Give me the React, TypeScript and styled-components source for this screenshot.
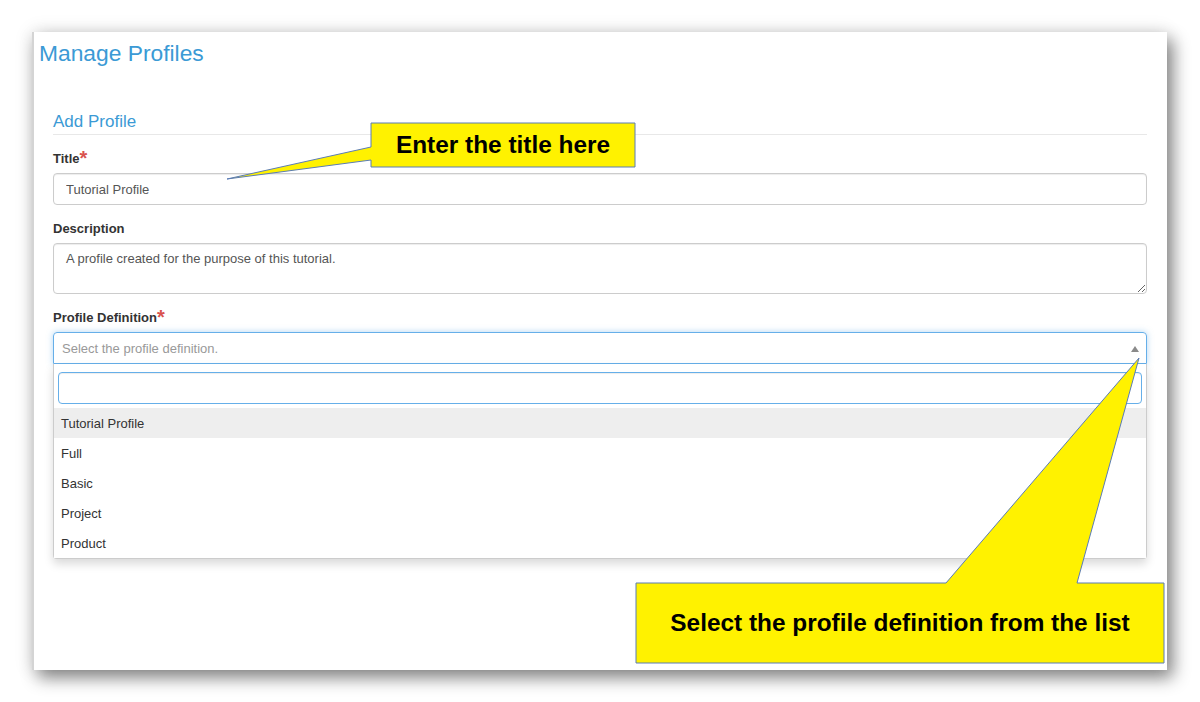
import React from "react";
import styled, { createGlobalStyle } from "styled-components";

const Global = createGlobalStyle`
  body {
    margin: 0;
    background: #fff;
    font-family: "Liberation Sans", Arial, sans-serif;
  }
  * { box-sizing: border-box; }
`;

const Page = styled.div`
  position: relative;
  width: 1200px;
  height: 702px;
  overflow: hidden;
  padding: 32px 0 0 32px;
  background: #fff;
`;

const Panel = styled.section`
  width: 1135px;
  height: 638px;
  background: #fff;
  border-left: 2px solid #d4d4d4;
  box-shadow: 6px 8px 16px rgba(0, 0, 0, 0.45), 0 0 18px rgba(0, 0, 0, 0.12);
  padding: 8px 20px 0 5px;
`;

const Heading = styled.h1`
  margin: 0;
  font-size: 22.8px;
  line-height: 27px;
  font-weight: normal;
  color: #3b9ad5;
`;

const Form = styled.form`
  margin: 45px 0 0 14px;
`;

const Legend = styled.h2`
  margin: 0 0 16px;
  font-size: 17px;
  line-height: 20px;
  font-weight: normal;
  color: #3b9ad5;
  padding-bottom: 2px;
  border-bottom: 1px solid #e8e8e8;
`;

const Group = styled.div`
  margin-bottom: 16px;
`;

const Label = styled.label`
  display: block;
  font-size: 13px;
  line-height: 15px;
  font-weight: bold;
  color: #333;
  margin-bottom: 7px;
`;

const Req = styled.span`
  color: #d9534f;
  font-size: 20px;
  font-weight: bold;
  line-height: 0;
  position: relative;
  top: 2px;
`;

const fieldBase = `
  display: block;
  width: 100%;
  border: 1px solid #ccc;
  border-radius: 4px;
  font-family: "Liberation Sans", Arial, sans-serif;
  font-size: 13px;
  color: #555;
  background: #fff;
  box-shadow: inset 0 1px 1px rgba(0, 0, 0, 0.075);
  outline: none;
`;

const Input = styled.input`
  ${fieldBase}
  height: 32px;
  padding: 0 12px;
`;

const TextArea = styled.textarea`
  ${fieldBase}
  height: 51px;
  padding: 7px 12px;
  line-height: 16px;
  resize: vertical;
`;

const SelectBox = styled.div`
  display: flex;
  align-items: center;
  justify-content: space-between;
  height: 32px;
  padding: 0 7px 0 8px;
  border: 1px solid #66afe9;
  border-radius: 4px 4px 0 0;
  box-shadow: 0 0 6px rgba(102, 175, 233, 0.5);
  font-size: 13px;
  color: #999;
`;

const Arrow = styled.span`
  width: 0;
  height: 0;
  border-left: 4px solid transparent;
  border-right: 4px solid transparent;
  border-bottom: 6px solid #8a8a8a;
  margin-top: 1px;
`;

const Dropdown = styled.div`
  border: 1px solid #ccc;
  border-top: none;
  border-radius: 0 0 4px 4px;
  box-shadow: 0 5px 10px rgba(0, 0, 0, 0.15);
  background: #fff;
`;

const SearchWrap = styled.div`
  padding: 8px 4px 4px;
`;

const Search = styled.input`
  ${fieldBase}
  height: 32px;
  border-color: #66afe9;
  padding: 0 8px;
`;

const Option = styled.div<{ $active?: boolean }>`
  height: 30px;
  line-height: 31px;
  padding: 0 7px;
  font-size: 13px;
  color: #333;
  background: ${({ $active }) => ($active ? "#eeeeee" : "#fff")};
`;

const Callout = styled.div`
  position: absolute;
  display: flex;
  align-items: center;
  justify-content: center;
  font-size: 24.4px;
  font-weight: bold;
  color: #000;
  svg {
    position: absolute;
    left: 0;
    top: 0;
    overflow: visible;
  }
  span {
    position: relative;
  }
`;

const options = ["Tutorial Profile", "Full", "Basic", "Project", "Product"];

export default function App() {
  return (
    <Page>
      <Global />
      <Panel>
        <Heading>Manage Profiles</Heading>
        <Form onSubmit={(e) => e.preventDefault()}>
          <Legend>Add Profile</Legend>
          <Group>
            <Label>
              Title<Req>*</Req>
            </Label>
            <Input defaultValue="Tutorial Profile" />
          </Group>
          <Group>
            <Label>Description</Label>
            <TextArea defaultValue="A profile created for the purpose of this tutorial." />
          </Group>
          <Group>
            <Label>
              Profile Definition<Req>*</Req>
            </Label>
            <SelectBox>
              <span>Select the profile definition.</span>
              <Arrow />
            </SelectBox>
            <Dropdown>
              <SearchWrap>
                <Search />
              </SearchWrap>
              {options.map((o, i) => (
                <Option key={o} $active={i === 0}>
                  {o}
                </Option>
              ))}
            </Dropdown>
          </Group>
        </Form>
      </Panel>

      <Callout style={{ left: 371, top: 123, width: 264, height: 44 }}>
        <svg width="264" height="44">
          <path
            d="M0 0 H264 V44 H0 V37 L-144 56 L0 24 Z"
            fill="#fff200"
            stroke="#5b7cb5"
            strokeWidth="1"
          />
        </svg>
        <span>Enter the title here</span>
      </Callout>

      <Callout style={{ left: 636, top: 583, width: 528, height: 80 }}>
        <svg width="528" height="80">
          <path
            d="M0 0 H310 L503 -225 L441 0 H528 V80 H0 Z"
            fill="#fff200"
            stroke="#5b7cb5"
            strokeWidth="1"
          />
        </svg>
        <span>Select the profile definition from the list</span>
      </Callout>
    </Page>
  );
}
